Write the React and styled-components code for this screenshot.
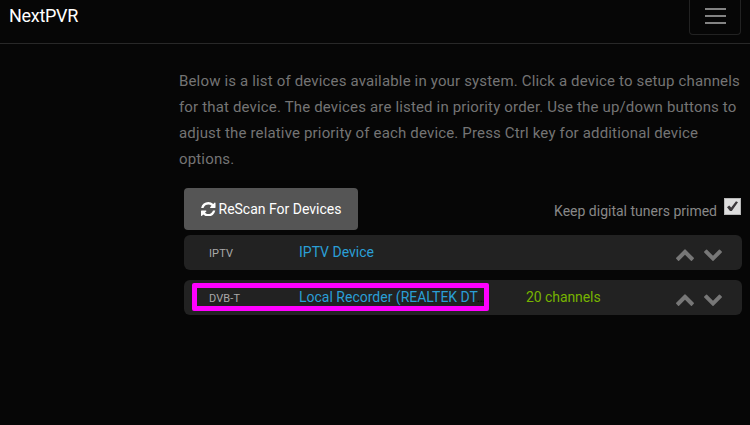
import React from 'react';
import styled, { createGlobalStyle } from 'styled-components';

const GlobalStyle = createGlobalStyle`
  * {
    box-sizing: border-box;
  }
  body {
    margin: 0;
    background: #060606;
    color: #888;
    font-family: Roboto, 'Liberation Sans', sans-serif;
    font-size: 14px;
    overflow: hidden;
  }
`;

const Navbar = styled.nav`
  display: flex;
  justify-content: space-between;
  align-items: flex-start;
  height: 44px;
  padding: 0 9px;
  border-bottom: 1px solid #282828;
`;

const Brand = styled.a`
  padding-top: 5px;
  color: #fff;
  font-size: 18px;
  line-height: 22px;
  letter-spacing: -0.3px;
`;

const Toggler = styled.button`
  display: flex;
  justify-content: center;
  width: 52px;
  height: 35px;
  padding: 8px 0 0;
  background: none;
  border: 1px solid #222;
  border-top: 0;
  border-radius: 0 0 4px 4px;
`;

const Bars = styled.span`
  display: flex;
  flex-direction: column;
  gap: 5px;
  width: 21px;
`;

const Bar = styled.span`
  height: 2px;
  background: #838383;
`;

const Content = styled.main`
  padding: 24px 8px 0 179px;
`;

const Intro = styled.p`
  margin: 0 -8px 0 0;
  color: #747474;
  font-size: 15px;
  line-height: 26px;
  letter-spacing: 0.16px;
`;

const IntroLine = styled.span`
  display: block;
  white-space: nowrap;
`;

const Devices = styled.section`
  padding: 16px 0 0 5px;
`;

const Toolbar = styled.div`
  display: flex;
  justify-content: space-between;
  height: 42px;
  margin-bottom: 5px;
`;

const RescanButton = styled.button`
  display: flex;
  align-items: center;
  gap: 3px;
  width: 174px;
  height: 42px;
  padding: 0 0 0 17px;
  background: #555;
  border: 0;
  border-radius: 4px;
  color: #fff;
  font: inherit;
  white-space: nowrap;
`;

const Primed = styled.label`
  display: flex;
  align-items: flex-start;
  gap: 7px;
  padding: 10px 1px 0 0;
  line-height: 26px;
`;

const Checkbox = styled.span`
  display: block;
  width: 17px;
  height: 17px;
  background: #dedede;
  border: 1px solid #b8b8b8;

  svg {
    display: block;
  }
`;

const Row = styled.div`
  display: flex;
  align-items: center;
  height: 35px;
  margin-bottom: 10px;
  padding: 0 19px 0 25px;
  background: #222;
  border-radius: 6px;
`;

const Kind = styled.span`
  width: 90px;
  padding-top: 2px;
  color: #a9a9a9;
  font-size: 11px;
  letter-spacing: 0.1px;
`;

const Name = styled.a`
  width: 191px;
  padding-bottom: 2px;
  overflow: hidden;
  color: #2a9fd6;
  white-space: nowrap;
`;

const Dots = styled.span`
  color: #080808;
`;

const Channels = styled.span`
  margin-left: 36px;
  padding-bottom: 2px;
  color: #77b300;
  letter-spacing: -0.07px;
`;

const Arrows = styled.span`
  display: flex;
  gap: 8px;
  margin-left: auto;
  padding-top: 3px;
  color: #777;
`;

// Marks the tuner row over the list
const Highlight = styled.div`
  position: absolute;
  top: 283px;
  left: 192px;
  width: 297px;
  height: 28px;
  border: 5px solid #f0f;
  border-radius: 2px;
`;

const RefreshIcon = () => (
  <svg
    width="14.5"
    height="14.5"
    viewBox="128 128 1536 1536"
    fill="currentColor"
  >
    <path d="M1639 1056q0 5-1 7-64 268-268 434.5t-478 166.5q-146 0-282.5-55t-243.5-157l-129 129q-19 19-45 19t-45-19-19-45v-448q0-26 19-45t45-19h448q26 0 45 19t19 45-19 45l-137 137q71 66 161 102t187 36q134 0 250-65t186-179q11-17 53-117 8-23 30-23h192q13 0 22.5 9.5t9.5 22.5zm25-800v448q0 26-19 45t-45 19h-448q-26 0-45-19t-19-45 19-45l138-138q-148-137-349-137-134 0-250 65t-186 179q-11 17-53 117-8 23-30 23h-199q-13 0-22.5-9.5t-9.5-22.5v-7q65-268 270-434.5t480-166.5q146 0 284 55.5t245 156.5l130-129q19-19 45-19t45 19 19 45z" />
  </svg>
);

const ChevronUp = () => (
  <svg width="20" height="20" viewBox="0 0 1792 1792" fill="currentColor">
    <path d="M1683 1331l-166 165q-19 19-45 19t-45-19l-531-531-531 531q-19 19-45 19t-45-19l-166-165q-19-19-19-45.5t19-45.5l742-741q19-19 45-19t45 19l742 741q19 19 19 45.5t-19 45.5z" />
  </svg>
);

const ChevronDown = () => (
  <svg width="20" height="20" viewBox="0 40 1792 1792" fill="currentColor">
    <path d="M1683 808l-742 741q-19 19-45 19t-45-19l-742-741q-19-19-19-45.5t19-45.5l166-165q19-19 45-19t45 19l531 531 531-531q19-19 45-19t45 19l166 165q19 19 19 45.5t-19 45.5z" />
  </svg>
);

const intro = [
  'Below is a list of devices available in your system. Click a device to setup channels',
  'for that device. The devices are listed in priority order. Use the up/down buttons to',
  'adjust the relative priority of each device. Press Ctrl key for additional device',
  'options.',
];

const devices = [
  { id: 1, kind: 'IPTV', name: 'IPTV Device' },
  {
    id: 2,
    kind: 'DVB-T',
    name: 'Local Recorder (REALTEK DT',
    cut: true,
    channels: '20 channels',
  },
];

const App = () => (
  <>
    <GlobalStyle />
    <Navbar>
      <Brand>NextPVR</Brand>
      <Toggler aria-label="Menu">
        <Bars>
          <Bar />
          <Bar />
          <Bar />
        </Bars>
      </Toggler>
    </Navbar>
    <Content>
      <Intro>
        {intro.map(line => (
          <IntroLine key={line}>{line}</IntroLine>
        ))}
      </Intro>
      <Devices>
        <Toolbar>
          <RescanButton>
            <RefreshIcon />
            ReScan For Devices
          </RescanButton>
          <Primed>
            Keep digital tuners primed
            <Checkbox>
              <svg width="15" height="15" viewBox="0 0 15 15">
                <path
                  d="M2 8.2l2.2-1.8 2 2L11 2.2l2 1L6.8 12H5z"
                  fill="#3c393c"
                />
              </svg>
            </Checkbox>
          </Primed>
        </Toolbar>
        {devices.map(device => (
          <Row key={device.id}>
            <Kind>{device.kind}</Kind>
            <Name>
              {device.name}
              {device.cut && <Dots>…</Dots>}
            </Name>
            {device.channels && <Channels>{device.channels}</Channels>}
            <Arrows>
              <ChevronUp />
              <ChevronDown />
            </Arrows>
          </Row>
        ))}
      </Devices>
    </Content>
    <Highlight />
  </>
);

export default App;
